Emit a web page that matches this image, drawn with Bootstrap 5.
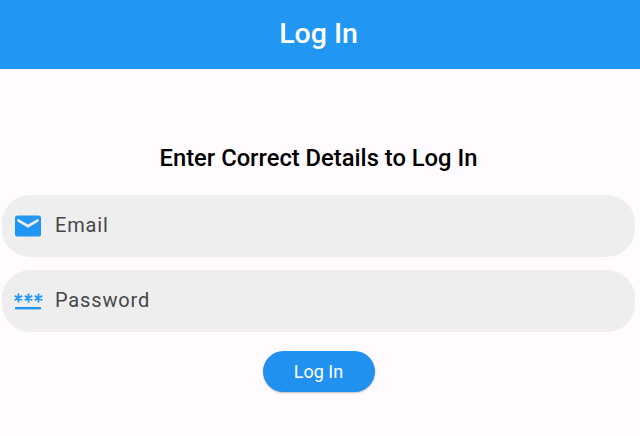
<!DOCTYPE html>
<html lang="en">
<head>
    <meta charset="UTF-8">
    <meta name="viewport" content="width=device-width, initial-scale=1.0">
    <title>Log In</title>
    <link href="https://cdn.jsdelivr.net/npm/bootstrap@5.3.0/dist/css/bootstrap.min.css" rel="stylesheet">
    <style>
        html, body { height: 100%; }
        body { background: #fffbfe; font-family: Roboto, sans-serif; overflow: hidden; }
        .app-bar { height: 69px; background: #2196f3; padding-right: 3px; font-size: 28.5px; font-weight: 500; }
        .page-title { font-size: 23.75px; font-weight: 500; line-height: 32px; margin-top: 73px; margin-bottom: 21px; padding-right: 3px; color: #000; }
        .login-form { padding: 0 5px 0 2px; }
        .pill-field { height: 62px; background: #eeeeee; border-radius: 28px; padding-left: 12px; margin-bottom: 13px; }
        .pill-field svg { flex-shrink: 0; }
        .pill-field input { background: transparent; border: 0; outline: 0; font-size: 20px; letter-spacing: .85px; color: #47464b; padding: 0 0 2px; width: 100%; margin-left: 12px; }
        .pill-field input::placeholder { color: #47464b; opacity: 1; }
        .login-btn { background: #2191ef; color: #fff; border: 0; border-radius: 21px; width: 112px; height: 41px; margin-top: 2px; font-size: 18px; font-weight: 400; box-shadow: 0 1px 2px rgba(0,0,0,.25); }
        .login-btn:hover { background: #2191ef; color: #fff; }
    </style>
</head>
<body>
    <div class="app-bar d-flex align-items-center justify-content-center text-white">Log In</div>
    <h1 class="page-title text-center">Enter Correct Details to Log In</h1>
    <form class="login-form">
        <div class="pill-field d-flex align-items-center">
            <svg width="29" height="22" viewBox="0 0 29 22"><path fill="#2196f3" fill-rule="evenodd" d="M3.500 .5h21a2.500 2.500 0 0 1 2.500 2.500v16a2.500 2.500 0 0 1-2.500 2.500h-21A2.500 2.500 0 0 1 1 19V3A2.500 2.500 0 0 1 3.500 .5zM3.500 3.500v3l10.500 6.300 10.500-6.300v-3L14 9.500z"/></svg>
            <input type="text" placeholder="Email">
        </div>
        <div class="pill-field d-flex align-items-center">
            <svg width="29" height="22" viewBox="0 0 29 22"><g stroke="#2196f3" stroke-width="1.800"><path d="M4.500 3.600v8.800M.7 5.800l7.600 4.400M8.300 5.800.7 10.200M14.500 3.600v8.800M10.700 5.800l7.600 4.400M18.300 5.800l-7.600 4.400M24.500 3.600v8.800M20.700 5.800l7.600 4.400M28.300 5.800l-7.600 4.400"/></g><rect x="1" y="17" width="26" height="2.400" fill="#2196f3"/></svg>
            <input type="password" placeholder="Password">
        </div>
        <div class="text-center pt-1">
            <button type="button" class="btn login-btn p-0">Log In</button>
        </div>
    </form>
    <script src="https://cdn.jsdelivr.net/npm/bootstrap@5.3.0/dist/js/bootstrap.bundle.min.js"></script>
</body>
</html>
